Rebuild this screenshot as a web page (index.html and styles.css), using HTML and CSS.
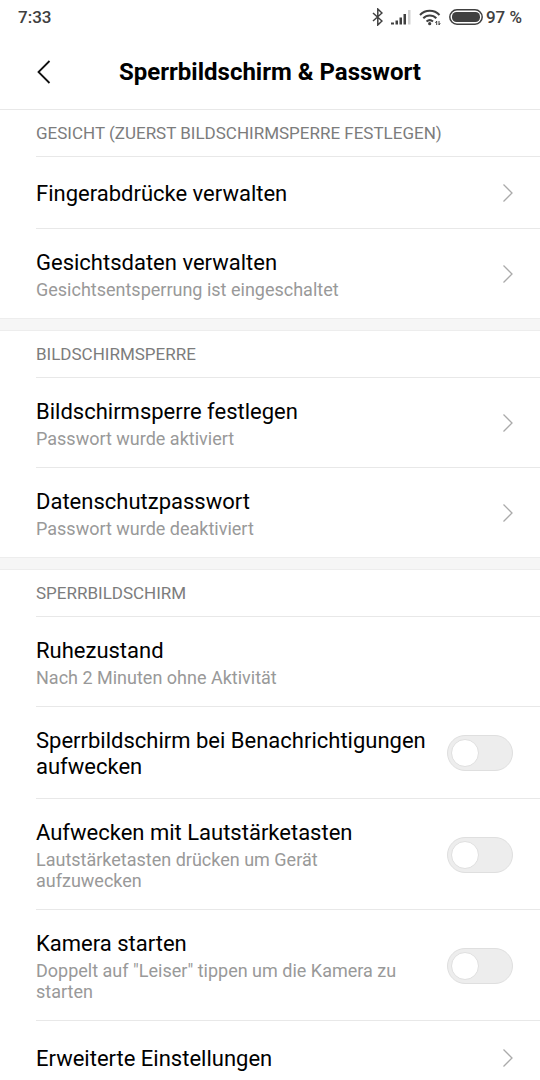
FILE: index.html
```
<!DOCTYPE html>
<html lang="de">
<head>
<meta charset="utf-8">
<meta name="viewport" content="width=device-width, initial-scale=1">
<title>Sperrbildschirm &amp; Passwort</title>
<link rel="stylesheet" href="styles.css">
</head>
<body>
<svg class="defs" aria-hidden="true">
  <symbol id="chevron" viewBox="0 0 12 20"><path d="M2.500 1.500 11 10l-8.500 8.500" fill="none" stroke="currentColor" stroke-width="1.300"/></symbol>
</svg>
<div class="screen">
  <div class="status">
    <span class="clock">7:33</span>
    <div class="indicators">
      <svg class="bluetooth" viewBox="0 0 12 18" aria-label="Bluetooth"><path d="M2 5l9 8-4.200 4V1L11 5l-9 8" fill="none" stroke="currentColor" stroke-width="1.500"/></svg>
      <svg class="signal" viewBox="0 0 20 16" aria-label="Mobilfunk"><path d="M0 15.500v-2h3v2zM4.500 15.500v-4h2.500v4zM8.500 15.500V8.500H11v7zM12.500 15.500V5H15v10.500z" fill="currentColor"/><path d="M17 15.500V1h2.500v14.500z" fill="#d0d0d0"/></svg>
      <svg class="wifi" viewBox="0 0 22 17" aria-label="WLAN"><g fill="none" stroke="currentColor" stroke-width="2"><path d="M1 6a13.500 13.500 0 0 1 19.500 0"/><path d="M4.300 9.300a9 9 0 0 1 13 0"/><path d="M7.500 12.500a5 5 0 0 1 6.500 0"/></g><circle cx="10.700" cy="14.700" r="1.600" fill="currentColor"/><path d="M16.500 14l1.200-2v4M20 12v4l1.200-2" fill="none" stroke="currentColor"/></svg>
      <div class="power">
        <svg class="battery" viewBox="0 0 34 16" aria-label="Akku"><rect x="0.800" y="0.800" width="32.400" height="14.400" rx="7.200" fill="none" stroke="currentColor" stroke-width="1.500"/><rect x="3" y="3" width="28" height="10" rx="4.500" fill="currentColor"/></svg>
        <span>97 %</span>
      </div>
    </div>
  </div>
  <header class="titlebar">
    <button class="back" aria-label="Zurück"><svg viewBox="0 0 16 26"><path d="M13.500 2 2.500 13l11 11" fill="none" stroke="currentColor" stroke-width="1.800"/></svg></button>
    <h1>Sperrbildschirm &amp; Passwort</h1>
  </header>
  <main class="settings">
    <section class="group">
      <h2>GESICHT (ZUERST BILDSCHIRMSPERRE FESTLEGEN)</h2>
      <a class="row" href="#"><span class="text"><span class="name">Fingerabdrücke verwalten</span></span><svg class="chevron"><use href="#chevron"/></svg></a>
      <a class="row" href="#"><span class="text"><span class="name">Gesichtsdaten verwalten</span><span class="note">Gesichtsentsperrung ist eingeschaltet</span></span><svg class="chevron"><use href="#chevron"/></svg></a>
    </section>
    <section class="group">
      <h2>BILDSCHIRMSPERRE</h2>
      <a class="row" href="#"><span class="text"><span class="name">Bildschirmsperre festlegen</span><span class="note">Passwort wurde aktiviert</span></span><svg class="chevron"><use href="#chevron"/></svg></a>
      <a class="row" href="#"><span class="text"><span class="name">Datenschutzpasswort</span><span class="note">Passwort wurde deaktiviert</span></span><svg class="chevron"><use href="#chevron"/></svg></a>
    </section>
    <section class="group">
      <h2>SPERRBILDSCHIRM</h2>
      <a class="row" href="#"><span class="text"><span class="name">Ruhezustand</span><span class="note">Nach 2 Minuten ohne Aktivität</span></span></a>
      <label class="row"><span class="text"><span class="name">Sperrbildschirm bei Benachrichtigungen aufwecken</span></span><input class="switch" type="checkbox" role="switch"></label>
      <label class="row"><span class="text"><span class="name">Aufwecken mit Lautstärketasten</span><span class="note">Lautstärketasten drücken um Gerät aufzuwecken</span></span><input class="switch" type="checkbox" role="switch"></label>
      <label class="row"><span class="text"><span class="name">Kamera starten</span><span class="note">Doppelt auf "Leiser" tippen um die Kamera zu starten</span></span><input class="switch" type="checkbox" role="switch"></label>
      <a class="row" href="#"><span class="text"><span class="name">Erweiterte Einstellungen</span></span><svg class="chevron"><use href="#chevron"/></svg></a>
    </section>
  </main>
</div>
</body>
</html>
```
FILE: styles.css
```
*, *::before { box-sizing: border-box; }
body {
  margin: 0;
  background: #fff;
  color: #000;
  font-family: Roboto, "Liberation Sans", sans-serif;
}
.defs { display: none; }
.screen {
  display: flex;
  flex-direction: column;
  height: 100vh;
}
.status {
  display: flex;
  justify-content: space-between;
  align-items: center;
  height: 34px;
  padding: 0 18px;
  color: #404040;
  font-size: 17px;
  font-weight: 500;
}
.indicators { display: flex; align-items: center; gap: 8px; }
.power { display: flex; align-items: center; gap: 3px; }
.bluetooth { width: 12px; height: 18px; }
.signal { width: 20px; height: 16px; }
.wifi { width: 22px; height: 17px; }
.battery { width: 34px; height: 16px; }
.titlebar {
  display: grid;
  grid-template-columns: 52px 1fr 52px;
  align-items: center;
  height: 76px;
  padding: 0 18px;
  border-bottom: 1px solid #e8e8e8;
}
.back {
  display: grid;
  place-items: center;
  height: 52px;
  padding: 0;
  border: 0;
  background: none;
  color: #111;
}
.back svg { width: 16px; height: 26px; }
h1 {
  margin: 0;
  font-size: 24px;
  font-weight: 700;
  line-height: 28px;
  text-align: center;
}
.settings {
  flex: 1;
  min-height: 0;
  overflow-y: auto;
  scrollbar-width: none;
}
.group { padding-left: 36px; }
.group + .group::before {
  content: "";
  display: block;
  height: 13px;
  margin-left: -36px;
  border: solid #ededed;
  border-width: 1px 0;
  background: #f6f6f6;
}
h2 {
  margin: 0;
  padding: 13px 0 12px;
  border-bottom: 1px solid #e8e8e8;
  color: #7c7c7c;
  font-size: 17px;
  font-weight: 400;
  line-height: 21px;
}
.row {
  display: flex;
  align-items: center;
  gap: 21px;
  min-height: 72px;
  padding: 19px 27px 18px 0;
  border-bottom: 1px solid #e8e8e8;
  color: inherit;
  text-decoration: none;
}
.row:last-child { border-bottom: 0; }
.text { display: flex; flex: 1; flex-direction: column; gap: 3px; padding-top: 2px; }
.name { font-size: 22px; line-height: 26px; }
.note { color: #999; font-size: 18px; line-height: 21px; }
.chevron { width: 12px; height: 20px; color: #aaa; }
.switch {
  display: flex;
  align-items: center;
  width: 66px;
  height: 36px;
  margin: 0;
  padding: 0 3px;
  border: 1px solid #dfdfdf;
  border-radius: 18px;
  background: #ededed;
  appearance: none;
}
.switch::before {
  content: "";
  width: 28px;
  height: 28px;
  border: 1px solid #dfdfdf;
  border-radius: 50%;
  background: #fff;
}
.switch:checked { justify-content: flex-end; background: #2b8cf0; }
```
